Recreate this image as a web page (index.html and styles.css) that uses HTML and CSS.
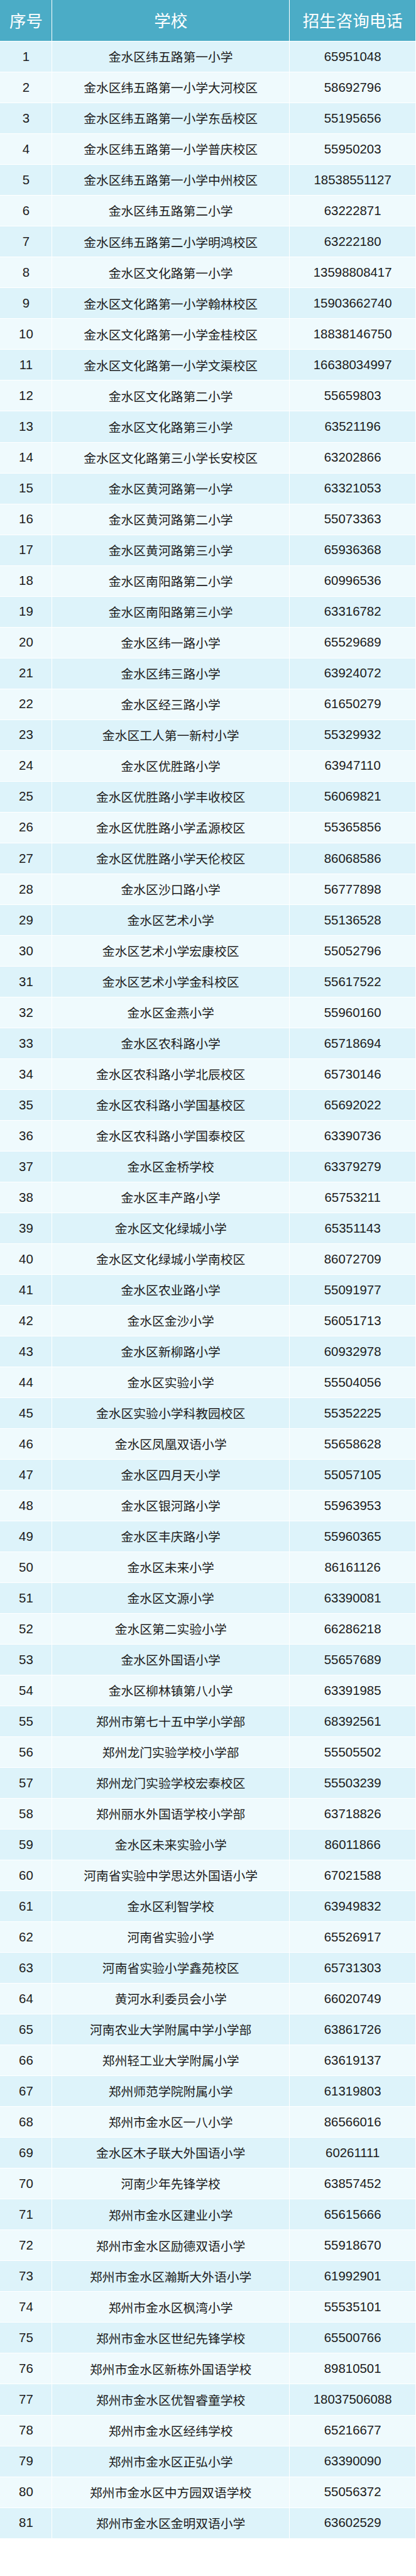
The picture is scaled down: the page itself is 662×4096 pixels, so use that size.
FILE: index.html
```html
<!DOCTYPE html>
<html lang="zh-CN">
<head>
<meta charset="utf-8">
<title>招生咨询电话</title>
<link rel="stylesheet" href="styles.css">
</head>
<body>
<table class="schools">
<colgroup><col class="c-no"><col class="c-name"><col class="c-tel"></colgroup>
<thead>
<tr><th>序号</th><th>学校</th><th>招生咨询电话</th></tr>
</thead>
<tbody>
<tr><td class="num">1</td><td>金水区纬五路第一小学</td><td class="num">65951048</td></tr>
<tr><td class="num">2</td><td>金水区纬五路第一小学大河校区</td><td class="num">58692796</td></tr>
<tr><td class="num">3</td><td>金水区纬五路第一小学东岳校区</td><td class="num">55195656</td></tr>
<tr><td class="num">4</td><td>金水区纬五路第一小学普庆校区</td><td class="num">55950203</td></tr>
<tr><td class="num">5</td><td>金水区纬五路第一小学中州校区</td><td class="num">18538551127</td></tr>
<tr><td class="num">6</td><td>金水区纬五路第二小学</td><td class="num">63222871</td></tr>
<tr><td class="num">7</td><td>金水区纬五路第二小学明鸿校区</td><td class="num">63222180</td></tr>
<tr><td class="num">8</td><td>金水区文化路第一小学</td><td class="num">13598808417</td></tr>
<tr><td class="num">9</td><td>金水区文化路第一小学翰林校区</td><td class="num">15903662740</td></tr>
<tr><td class="num">10</td><td>金水区文化路第一小学金桂校区</td><td class="num">18838146750</td></tr>
<tr><td class="num">11</td><td>金水区文化路第一小学文渠校区</td><td class="num">16638034997</td></tr>
<tr><td class="num">12</td><td>金水区文化路第二小学</td><td class="num">55659803</td></tr>
<tr><td class="num">13</td><td>金水区文化路第三小学</td><td class="num">63521196</td></tr>
<tr><td class="num">14</td><td>金水区文化路第三小学长安校区</td><td class="num">63202866</td></tr>
<tr><td class="num">15</td><td>金水区黄河路第一小学</td><td class="num">63321053</td></tr>
<tr><td class="num">16</td><td>金水区黄河路第二小学</td><td class="num">55073363</td></tr>
<tr><td class="num">17</td><td>金水区黄河路第三小学</td><td class="num">65936368</td></tr>
<tr><td class="num">18</td><td>金水区南阳路第二小学</td><td class="num">60996536</td></tr>
<tr><td class="num">19</td><td>金水区南阳路第三小学</td><td class="num">63316782</td></tr>
<tr><td class="num">20</td><td>金水区纬一路小学</td><td class="num">65529689</td></tr>
<tr><td class="num">21</td><td>金水区纬三路小学</td><td class="num">63924072</td></tr>
<tr><td class="num">22</td><td>金水区经三路小学</td><td class="num">61650279</td></tr>
<tr><td class="num">23</td><td>金水区工人第一新村小学</td><td class="num">55329932</td></tr>
<tr><td class="num">24</td><td>金水区优胜路小学</td><td class="num">63947110</td></tr>
<tr><td class="num">25</td><td>金水区优胜路小学丰收校区</td><td class="num">56069821</td></tr>
<tr><td class="num">26</td><td>金水区优胜路小学孟源校区</td><td class="num">55365856</td></tr>
<tr><td class="num">27</td><td>金水区优胜路小学天伦校区</td><td class="num">86068586</td></tr>
<tr><td class="num">28</td><td>金水区沙口路小学</td><td class="num">56777898</td></tr>
<tr><td class="num">29</td><td>金水区艺术小学</td><td class="num">55136528</td></tr>
<tr><td class="num">30</td><td>金水区艺术小学宏康校区</td><td class="num">55052796</td></tr>
<tr><td class="num">31</td><td>金水区艺术小学金科校区</td><td class="num">55617522</td></tr>
<tr><td class="num">32</td><td>金水区金燕小学</td><td class="num">55960160</td></tr>
<tr><td class="num">33</td><td>金水区农科路小学</td><td class="num">65718694</td></tr>
<tr><td class="num">34</td><td>金水区农科路小学北辰校区</td><td class="num">65730146</td></tr>
<tr><td class="num">35</td><td>金水区农科路小学国基校区</td><td class="num">65692022</td></tr>
<tr><td class="num">36</td><td>金水区农科路小学国泰校区</td><td class="num">63390736</td></tr>
<tr><td class="num">37</td><td>金水区金桥学校</td><td class="num">63379279</td></tr>
<tr><td class="num">38</td><td>金水区丰产路小学</td><td class="num">65753211</td></tr>
<tr><td class="num">39</td><td>金水区文化绿城小学</td><td class="num">65351143</td></tr>
<tr><td class="num">40</td><td>金水区文化绿城小学南校区</td><td class="num">86072709</td></tr>
<tr><td class="num">41</td><td>金水区农业路小学</td><td class="num">55091977</td></tr>
<tr><td class="num">42</td><td>金水区金沙小学</td><td class="num">56051713</td></tr>
<tr><td class="num">43</td><td>金水区新柳路小学</td><td class="num">60932978</td></tr>
<tr><td class="num">44</td><td>金水区实验小学</td><td class="num">55504056</td></tr>
<tr><td class="num">45</td><td>金水区实验小学科教园校区</td><td class="num">55352225</td></tr>
<tr><td class="num">46</td><td>金水区凤凰双语小学</td><td class="num">55658628</td></tr>
<tr><td class="num">47</td><td>金水区四月天小学</td><td class="num">55057105</td></tr>
<tr><td class="num">48</td><td>金水区银河路小学</td><td class="num">55963953</td></tr>
<tr><td class="num">49</td><td>金水区丰庆路小学</td><td class="num">55960365</td></tr>
<tr><td class="num">50</td><td>金水区未来小学</td><td class="num">86161126</td></tr>
<tr><td class="num">51</td><td>金水区文源小学</td><td class="num">63390081</td></tr>
<tr><td class="num">52</td><td>金水区第二实验小学</td><td class="num">66286218</td></tr>
<tr><td class="num">53</td><td>金水区外国语小学</td><td class="num">55657689</td></tr>
<tr><td class="num">54</td><td>金水区柳林镇第八小学</td><td class="num">63391985</td></tr>
<tr><td class="num">55</td><td>郑州市第七十五中学小学部</td><td class="num">68392561</td></tr>
<tr><td class="num">56</td><td>郑州龙门实验学校小学部</td><td class="num">55505502</td></tr>
<tr><td class="num">57</td><td>郑州龙门实验学校宏泰校区</td><td class="num">55503239</td></tr>
<tr><td class="num">58</td><td>郑州丽水外国语学校小学部</td><td class="num">63718826</td></tr>
<tr><td class="num">59</td><td>金水区未来实验小学</td><td class="num">86011866</td></tr>
<tr><td class="num">60</td><td>河南省实验中学思达外国语小学</td><td class="num">67021588</td></tr>
<tr><td class="num">61</td><td>金水区利智学校</td><td class="num">63949832</td></tr>
<tr><td class="num">62</td><td>河南省实验小学</td><td class="num">65526917</td></tr>
<tr><td class="num">63</td><td>河南省实验小学鑫苑校区</td><td class="num">65731303</td></tr>
<tr><td class="num">64</td><td>黄河水利委员会小学</td><td class="num">66020749</td></tr>
<tr><td class="num">65</td><td>河南农业大学附属中学小学部</td><td class="num">63861726</td></tr>
<tr><td class="num">66</td><td>郑州轻工业大学附属小学</td><td class="num">63619137</td></tr>
<tr><td class="num">67</td><td>郑州师范学院附属小学</td><td class="num">61319803</td></tr>
<tr><td class="num">68</td><td>郑州市金水区一八小学</td><td class="num">86566016</td></tr>
<tr><td class="num">69</td><td>金水区木子联大外国语小学</td><td class="num">60261111</td></tr>
<tr><td class="num">70</td><td>河南少年先锋学校</td><td class="num">63857452</td></tr>
<tr><td class="num">71</td><td>郑州市金水区建业小学</td><td class="num">65615666</td></tr>
<tr><td class="num">72</td><td>郑州市金水区励德双语小学</td><td class="num">55918670</td></tr>
<tr><td class="num">73</td><td>郑州市金水区瀚斯大外语小学</td><td class="num">61992901</td></tr>
<tr><td class="num">74</td><td>郑州市金水区枫湾小学</td><td class="num">55535101</td></tr>
<tr><td class="num">75</td><td>郑州市金水区世纪先锋学校</td><td class="num">65500766</td></tr>
<tr><td class="num">76</td><td>郑州市金水区新栋外国语学校</td><td class="num">89810501</td></tr>
<tr><td class="num">77</td><td>郑州市金水区优智睿童学校</td><td class="num">18037506088</td></tr>
<tr><td class="num">78</td><td>郑州市金水区经纬学校</td><td class="num">65216677</td></tr>
<tr><td class="num">79</td><td>郑州市金水区正弘小学</td><td class="num">63390090</td></tr>
<tr><td class="num">80</td><td>郑州市金水区中方园双语学校</td><td class="num">55056372</td></tr>
<tr><td class="num">81</td><td>郑州市金水区金明双语小学</td><td class="num">63602529</td></tr>
</tbody>
</table>
</body>
</html>
```

FILE: styles.css
```css
html, body {
  margin: 0;
  padding: 0;
  background: #ffffff;
}

.schools {
  width: 663px;
  margin: -1.1px 0 0 -0.6px;
  border-collapse: separate;
  border-spacing: 1.66px;
  table-layout: fixed;
  font-family: "Liberation Sans", "Noto Sans CJK SC", sans-serif;
  color: #1c1c1c;
}

.c-no { width: 81.6px; }
.c-name { width: 374.4px; }
.c-tel { width: 199.4px; }

.schools th,
.schools td {
  padding: 0;
  text-align: center;
  vertical-align: middle;
  white-space: nowrap;
}

.schools th {
  height: 65.4px;
  background: #4bacc6;
  color: #ffffff;
  font-family: "Noto Sans CJK SC", sans-serif;
  font-weight: 400;
  font-size: 26.5px;
  line-height: 1;
}

.schools td {
  height: 48.02px;
  font-family: "Noto Sans CJK SC", sans-serif;
  font-size: 19.8px;
  line-height: 1;
}

.schools td.num {
  font-family: "Liberation Sans", sans-serif;
  font-size: 20.4px;
}

.schools tbody tr:nth-child(odd) td {
  background: #ddf3fa;
}

.schools tbody tr:nth-child(even) td {
  background: #effafd;
}
```
